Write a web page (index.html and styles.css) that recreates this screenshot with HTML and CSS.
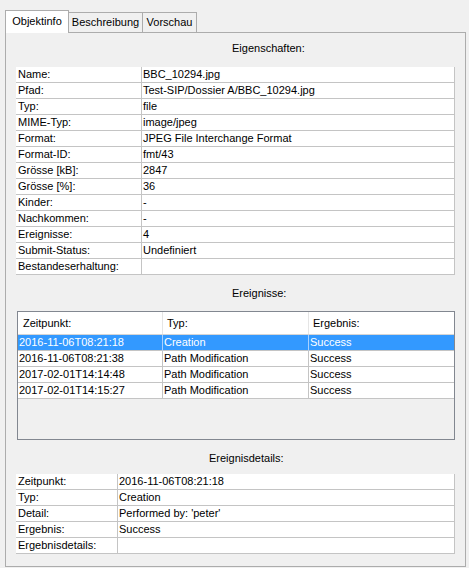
FILE: index.html
```html
<!DOCTYPE html>
<html>
<head>
<meta charset="utf-8">
<link rel="stylesheet" href="styles.css">
</head>
<body>
<div class="tabstrip">
  <div class="tab tab-active">Objektinfo</div>
  <div class="tab tab-besch">Beschreibung</div>
  <div class="tab tab-vor">Vorschau</div>
  <div class="tab-filler"></div>
</div>
<div class="panel">
  <div class="section-title title-props">Eigenschaften:</div>
  <div class="kv kv-props">
    <div class="kv-row"><div class="k">Name:</div><div class="v">BBC_10294.jpg</div></div>
    <div class="kv-row"><div class="k">Pfad:</div><div class="v">Test-SIP/Dossier A/BBC_10294.jpg</div></div>
    <div class="kv-row"><div class="k">Typ:</div><div class="v">file</div></div>
    <div class="kv-row"><div class="k">MIME-Typ:</div><div class="v">image/jpeg</div></div>
    <div class="kv-row"><div class="k">Format:</div><div class="v">JPEG File Interchange Format</div></div>
    <div class="kv-row"><div class="k">Format-ID:</div><div class="v">fmt/43</div></div>
    <div class="kv-row"><div class="k">Grösse [kB]:</div><div class="v">2847</div></div>
    <div class="kv-row"><div class="k">Grösse [%]:</div><div class="v">36</div></div>
    <div class="kv-row"><div class="k">Kinder:</div><div class="v">-</div></div>
    <div class="kv-row"><div class="k">Nachkommen:</div><div class="v">-</div></div>
    <div class="kv-row"><div class="k">Ereignisse:</div><div class="v">4</div></div>
    <div class="kv-row"><div class="k">Submit-Status:</div><div class="v">Undefiniert</div></div>
    <div class="kv-row"><div class="k">Bestandeserhaltung:</div><div class="v"></div></div>
  </div>

  <div class="section-title title-events">Ereignisse:</div>
  <div class="events">
    <div class="ev-head">
      <div class="hc">Zeitpunkt:</div>
      <div class="hc">Typ:</div>
      <div class="hc">Ergebnis:</div>
    </div>
    <div class="ev-row selected"><div class="c">2016-11-06T08:21:18</div><div class="c">Creation</div><div class="c">Success</div></div>
    <div class="ev-row"><div class="c">2016-11-06T08:21:38</div><div class="c">Path Modification</div><div class="c">Success</div></div>
    <div class="ev-row"><div class="c">2017-02-01T14:14:48</div><div class="c">Path Modification</div><div class="c">Success</div></div>
    <div class="ev-row"><div class="c">2017-02-01T14:15:27</div><div class="c">Path Modification</div><div class="c">Success</div></div>
  </div>

  <div class="section-title title-details">Ereignisdetails:</div>
  <div class="kv kv-details">
    <div class="kv-row"><div class="k">Zeitpunkt:</div><div class="v">2016-11-06T08:21:18</div></div>
    <div class="kv-row"><div class="k">Typ:</div><div class="v">Creation</div></div>
    <div class="kv-row"><div class="k">Detail:</div><div class="v">Performed by: 'peter'</div></div>
    <div class="kv-row"><div class="k">Ergebnis:</div><div class="v">Success</div></div>
    <div class="kv-row"><div class="k">Ergebnisdetails:</div><div class="v"></div></div>
  </div>
</div>
</body>
</html>
```

FILE: styles.css
```css
* { box-sizing: border-box; }

html, body {
  margin: 0;
  padding: 0;
  background: #f0f0f0;
}

body {
  font-family: "Liberation Sans", Arial, sans-serif;
  font-size: 11px;
  color: #000;
  width: 469px;
  height: 568px;
  overflow: hidden;
}

/* ---------- tabs ---------- */
.tabstrip {
  display: flex;
  align-items: flex-end;
  margin: 0 4px 0 5px;
  width: 461px;
  padding-top: 10px;
  height: 33px;
}

.tab {
  display: flex;
  align-items: center;
  justify-content: center;
  white-space: nowrap;
  background: #f0f0f0;
  border-top: 1px solid #acacac;
  border-right: 1px solid #acacac;
  border-bottom: 1px solid #acacac;
  height: 21px;
  padding-bottom: 1px;
}

.tab-active {
  width: 64px;
  height: 23px;
  background: #ffffff;
  border-left: 1px solid #acacac;
  border-bottom: none;
  padding-bottom: 2px;
}

.tab-besch { width: 74px; }
.tab-vor { width: 54px; }

.tab-filler {
  flex: 1;
  height: 1px;
  border-bottom: 1px solid #acacac;
  border-right: 1px solid #acacac;
}

/* ---------- panel ---------- */
.panel {
  margin: 0 4px 0 5px;
  width: 461px;
  height: 534px;
  border: 1px solid #acacac;
  border-top: none;
  background: #f0f0f0;
  padding-bottom: 12px;
}

.section-title {
  display: flex;
  align-items: center;
  white-space: nowrap;
  line-height: 13px;
}

.title-props {
  height: 34px;
  padding-left: 226px;
  padding-bottom: 3px;
}

.title-events {
  height: 36px;
  padding-left: 226px;
  padding-top: 1px;
}

.title-details {
  height: 34px;
  padding-left: 203px;
  padding-top: 2px;
}

/* ---------- key/value tables ---------- */
.kv {
  margin-left: 10px;
  width: 439px;
  background: #ffffff;
  border-right: 1px solid #c4c4c4;
}

.kv-row {
  display: grid;
  height: 16px;
  border-bottom: 1px solid #c4c4c4;
  line-height: 15px;
}

.kv-props .kv-row { grid-template-columns: 126px 1fr; }
.kv-details .kv-row { grid-template-columns: 102px 1fr; }

.k {
  border-right: 1px solid #c4c4c4;
  padding-left: 2px;
  white-space: nowrap;
  overflow: hidden;
}

.v {
  padding-left: 1px;
  white-space: nowrap;
  overflow: hidden;
}

/* ---------- events table ---------- */
.events {
  margin-left: 11px;
  width: 438px;
  height: 129px;
  border: 1px solid #828790;
  background: #f0f0f0;
}

.ev-head,
.ev-row {
  display: grid;
  grid-template-columns: 145px 146px 1fr;
}

.ev-head {
  height: 23px;
  background: #ffffff;
  border-bottom: 1px solid #d5d5d5;
  line-height: 22px;
}

.hc {
  padding-left: 4px;
  border-right: 1px solid #e5e5e5;
  white-space: nowrap;
}

.hc:first-child { padding-left: 5px; }
.hc:last-child { border-right: none; }

.ev-row {
  height: 16px;
  background: #ffffff;
  line-height: 15px;
}

.c {
  padding-left: 1px;
  border-right: 1px solid #c4c4c4;
  border-bottom: 1px solid #c4c4c4;
  white-space: nowrap;
  overflow: hidden;
}

.c:last-child { border-right: none; }

.ev-row.selected .c {
  background: #3399ff;
  color: #ffffff;
  border-right-color: #a9d1ff;
}
```
